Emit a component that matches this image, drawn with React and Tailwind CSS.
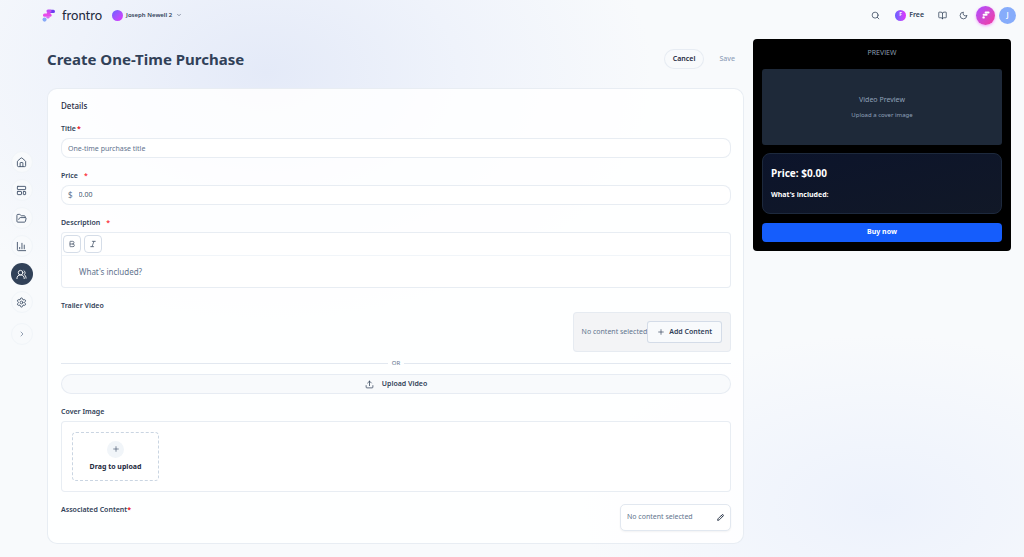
import React, { useState } from 'react';
import {
  Search, BookOpen, Moon, ChevronDown, ChevronRight, House, LayoutTemplate,
  FolderOpen, ChartColumn, UsersRound, Settings, Bold, Italic, Plus, Upload, Pencil
} from 'lucide-react';

const navItems = [
  { label: 'Home', icon: House },
  { label: 'Pages', icon: LayoutTemplate },
  { label: 'Library', icon: FolderOpen },
  { label: 'Analytics', icon: ChartColumn },
  { label: 'Community', icon: UsersRound, active: true },
  { label: 'Settings', icon: Settings }
];

const LogoMark = () => (
  <svg viewBox="0 0 40 38" className="h-[13px] w-[14px]" aria-hidden="true">
    <g strokeLinecap="round" strokeWidth="9" fill="none">
      <path d="M24 7h9" stroke="#6d3df0" />
      <path d="M17 6h6" stroke="#c04df5" />
      <path d="M17 12h4" stroke="#d946ef" strokeWidth="7" />
      <path d="M7 18h16" stroke="#e84bea" />
      <path d="M16 24h2" stroke="#d96af5" strokeWidth="7" />
    </g>
    <circle cx="7" cy="31" r="6" fill="#86a9f8" />
  </svg>
);

const FieldLabel = ({ htmlFor, children, required, spaced }) => (
  <label htmlFor={htmlFor} className="flex h-3 items-center text-[7px] font-semibold text-slate-700">
    {children}
    {required && <span className={spaced ? 'ml-[6px] text-red-500' : 'ml-px text-red-600'}>*</span>}
  </label>
);

const Header = () => (
  <header className="flex h-[30px] items-center justify-between pl-[42px] pr-2">
    <div className="flex items-center">
      <a href="#home" className="flex items-center gap-[6px]">
        <LogoMark />
        <span className="font-[Lato,sans-serif] text-[13px] leading-4 text-slate-800">frontro</span>
      </a>
      <button className="ml-[10px] flex items-center gap-[3px] text-[6px] font-semibold text-slate-700">
        <span className="h-[11px] w-[11px] rounded-full bg-linear-to-br from-indigo-500 to-fuchsia-500"></span>
        Joseph Newell 2
        <ChevronDown className="ml-px h-[6px] w-[6px]" />
      </button>
    </div>
    <div className="flex items-center text-slate-700">
      <button aria-label="Search"><Search className="h-[9px] w-[9px]" /></button>
      <button className="ml-[15px] flex items-center gap-[3px] text-[7px] font-semibold">
        <span className="flex h-[11px] w-[11px] items-center justify-center rounded-full bg-linear-to-r from-indigo-500 to-fuchsia-500 text-[5px] font-bold text-white">F</span>
        Free
      </button>
      <button aria-label="Docs" className="ml-[14px]"><BookOpen className="h-[9px] w-[9px]" /></button>
      <button aria-label="Dark mode" className="ml-3"><Moon className="h-[9px] w-[9px]" /></button>
      <button aria-label="Assistant" className="ml-2 flex h-[19px] w-[19px] items-center justify-center rounded-full bg-linear-to-br from-purple-500 to-pink-500 shadow-sm shadow-fuchsia-300">
        <svg viewBox="0 0 40 38" className="h-2 w-2" aria-hidden="true">
          <g stroke="#fff" strokeLinecap="round" strokeWidth="10">
            <path d="M18 7h15M8 18h15" />
          </g>
          <circle cx="8" cy="31" r="6" fill="#fff" />
        </svg>
      </button>
      <button className="ml-1 h-[17px] w-[17px] rounded-full bg-[#86acfb] text-[7px] font-semibold text-white">J</button>
    </div>
  </header>
);

const Sidebar = () => (
  <nav className="mt-[121px] flex w-[37px] shrink-0 flex-col items-center gap-[6px] self-start pl-[6px]">
    {navItems.map(({ label, icon: Icon, active }) => (
      <a
        key={label}
        href={`#${label.toLowerCase()}`}
        aria-label={label}
        className={`flex h-[22px] w-[22px] items-center justify-center rounded-full ${active ? 'bg-slate-700 text-white' : 'border border-slate-100 bg-slate-50 text-slate-600'}`}
      >
        <Icon className="h-[11px] w-[11px]" />
      </a>
    ))}
    <button aria-label="Expand" className="mt-1 flex h-[22px] w-[22px] items-center justify-center rounded-full border border-slate-100 bg-slate-50 text-slate-500">
      <ChevronRight className="h-2 w-2" />
    </button>
  </nav>
);

const DetailsForm = () => {
  const [title, setTitle] = useState('');
  const [price, setPrice] = useState('0.00');

  return (
    <section className="rounded-[10px] border border-slate-200/80 bg-white/85 pb-3 pl-[13px] pr-3 pt-[11px]">
      <h2 className="text-[8px] font-medium leading-3 text-slate-800">Details</h2>

      <div className="mt-[11px] flex flex-col gap-3">
        <div className="flex flex-col gap-[3px]">
          <FieldLabel htmlFor="title" required>Title</FieldLabel>
          <input
            id="title"
            value={title}
            onChange={(e) => setTitle(e.target.value)}
            placeholder="One-time purchase title"
            className="h-5 w-full rounded-lg border border-slate-200/80 bg-white px-[6px] text-[7px] text-slate-700 placeholder:text-slate-500"
          />
        </div>

        <div className="flex flex-col gap-[3px]">
          <FieldLabel htmlFor="price" required spaced>Price</FieldLabel>
          <div className="flex h-5 items-center gap-[6px] rounded-lg border border-slate-200/80 bg-white px-[6px]">
            <span className="text-[8px] text-slate-500">$</span>
            <input
              id="price"
              value={price}
              onChange={(e) => setPrice(e.target.value)}
              className="min-w-0 flex-1 text-[7px] text-slate-600"
            />
          </div>
        </div>

        <div className="flex flex-col gap-[3px]">
          <FieldLabel htmlFor="description" required spaced>Description</FieldLabel>
          <div className="rounded-[4px] border border-slate-200/80 bg-white">
            <div className="flex gap-[3px] border-b border-slate-100 px-px py-[2px]">
              <button aria-label="Bold" className="flex h-[18px] w-[18px] items-center justify-center rounded-[4px] border border-slate-300/80 text-slate-700">
                <Bold className="h-2 w-2" />
              </button>
              <button aria-label="Italic" className="flex h-[18px] w-[18px] items-center justify-center rounded-[4px] border border-slate-300/80 text-slate-700">
                <Italic className="h-2 w-2" />
              </button>
            </div>
            <textarea
              id="description"
              rows={1}
              placeholder="What's included?"
              className="block h-[31px] w-full resize-none px-[17px] py-[10px] text-[8px] leading-3 text-slate-700 placeholder:text-slate-500"
            />
          </div>
        </div>

        <div>
          <h3 className="text-[7px] font-semibold leading-3 text-slate-700">Trailer Video</h3>
          <div className="flex justify-end">
            <div className="flex h-10 items-center rounded-[4px] border border-slate-200/80 bg-gray-100 px-2">
              <span className="text-[7px] text-slate-500">No content selected</span>
              <button className="flex h-[22px] items-center gap-1 rounded-[3px] border border-slate-300/80 bg-slate-50 px-[9px] text-[7px] font-semibold text-slate-700">
                <Plus className="h-2 w-2" />
                Add Content
              </button>
            </div>
          </div>
          <div className="my-[5px] flex h-3 items-center gap-1 text-[6px] text-slate-500">
            <span className="h-px flex-1 bg-slate-200"></span>
            OR
            <span className="h-px flex-1 bg-slate-200"></span>
          </div>
          <button className="flex h-5 w-full items-center justify-center gap-2 rounded-full border border-slate-200/80 bg-slate-50 text-[7px] font-semibold text-slate-700">
            <Upload className="h-[9px] w-[9px]" />
            Upload Video
          </button>
        </div>

        <div className="flex flex-col gap-[3px]">
          <h3 className="text-[7px] font-semibold leading-3 text-slate-700">Cover Image</h3>
          <div className="rounded-[4px] border border-slate-200/80 bg-white p-[10px]">
            <button className="flex h-[49px] w-[87px] flex-col items-center justify-center gap-[3px] rounded-[4px] border border-dashed border-slate-300 text-[7px] font-bold leading-3 text-slate-800">
              <span className="flex h-[17px] w-[17px] items-center justify-center rounded-full bg-slate-100 text-slate-600">
                <Plus className="h-2 w-2" />
              </span>
              Drag to upload
            </button>
          </div>
        </div>

        <div className="flex items-start justify-between">
          <h3 className="text-[7px] font-semibold leading-3 text-slate-700">
            Associated Content<span className="text-red-600">*</span>
          </h3>
          <button className="flex h-[27px] w-[111px] items-center justify-between rounded-[5px] border border-slate-200 bg-white px-[6px] text-[7px] text-slate-500 shadow-xs">
            No content selected
            <Pencil strokeWidth={3} className="h-[7px] w-[7px] text-slate-800" />
          </button>
        </div>
      </div>
    </section>
  );
};

const Preview = () => (
  <aside className="mt-[9px] w-[258px] shrink-0 self-start rounded-[4px] bg-black px-[9px] pb-[9px] pt-2">
    <p className="text-center font-['Open_Sans',sans-serif] text-[7px] leading-[12px] text-slate-400">PREVIEW</p>
    <div className="mt-[10px] flex h-[76px] flex-col items-center justify-center gap-[3px] rounded-[3px] bg-gray-800 text-slate-400">
      <p className="text-[7px] leading-3">Video Preview</p>
      <p className="text-[6px] leading-3">Upload a cover image</p>
    </div>
    <div className="mt-2 flex h-[61px] flex-col justify-center gap-[10px] rounded-[8px] border border-slate-800 bg-linear-to-br from-[#0c142b] to-[#111827] px-2 text-white">
      <p className="text-[10px] font-bold leading-3">Price: $0.00</p>
      <p className="text-[7px] font-bold leading-3">What's included:</p>
    </div>
    <button className="mt-[9px] block h-[19px] w-full rounded-[4px] bg-[#155dfc] text-[7px] font-bold text-white">Buy now</button>
  </aside>
);

export default function App() {
  return (
    <div className="min-h-screen bg-slate-50 bg-[radial-gradient(ellipse_at_26%_13%,#e4eaf8_0%,#eff3fb_18%,transparent_36%),radial-gradient(ellipse_at_86%_91%,#edf2fc_0%,transparent_24%)] font-['Noto_Sans',sans-serif]">
      <Header />
      <div className="flex pr-[13px]">
        <Sidebar />
        <main className="ml-[10px] mr-[9px] min-w-0 flex-1 pb-[13px]">
          <div className="flex h-[58px] items-center justify-between">
            <h1 className="text-[15px] font-bold leading-5 text-slate-700">Create One-Time Purchase</h1>
            <div className="flex items-center gap-[6px] text-[7px]">
              <button className="h-5 rounded-full border border-slate-200/80 bg-slate-50 px-2 font-semibold text-slate-800">Cancel</button>
              <button className="h-5 px-[9px] font-medium text-slate-400">Save</button>
            </div>
          </div>
          <DetailsForm />
        </main>
        <Preview />
      </div>
    </div>
  );
}
